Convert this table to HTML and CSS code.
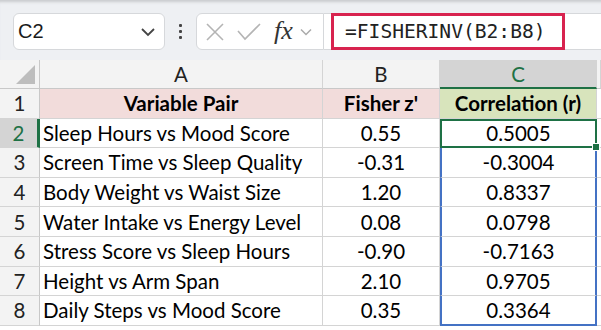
FILE: index.html
```html
<!DOCTYPE html>
<html>
<head>
<meta charset="utf-8">
<link rel="stylesheet" href="styles.css">
</head>
<body>
<div class="toolbar">
  <div class="namebox">
    <span class="name">C2</span>
    <svg class="chev" width="16" height="10" viewBox="0 0 16 10"><path d="M2 2 L8 8 L14 2" fill="none" stroke="#444" stroke-width="1.8"/></svg>
  </div>
  <div class="dots"><i></i><i></i><i></i></div>
  <div class="fxbox">
    <svg width="20" height="20" viewBox="0 0 20 20"><path d="M2 2 L18 18 M18 2 L2 18" stroke="#b4b4b4" stroke-width="1.6" fill="none"/></svg>
    <svg width="26" height="20" viewBox="0 0 26 20"><path d="M2 9 L9 17 L24 2" stroke="#b4b4b4" stroke-width="1.6" fill="none"/></svg>
    <span class="fx">fx</span>
    <svg class="chev2" width="12" height="8" viewBox="0 0 12 8"><path d="M1 1.5 L6 6.5 L11 1.5" fill="none" stroke="#aaa" stroke-width="1.5"/></svg>
  </div>
  <div class="formula">
    <div class="hl">=FISHERINV(B2:B8)</div>
  </div>
</div>
<div class="sheet">
  <div class="corner"><span class="tri"></span></div>
  <div class="ch">A</div>
  <div class="ch">B</div>
  <div class="ch sel">C</div>
  <div class="ch rest"></div>

  <div class="rh">1</div>
  <div class="c hd pink ctr">Variable Pair</div>
  <div class="c hd pink ctr">Fisher z'</div>
  <div class="c hd green ctr">Correlation (r)</div>
  <div class="c rest"></div>

  <div class="rh rsel">2</div>
  <div class="c">Sleep Hours vs Mood Score</div>
  <div class="c ctr">0.55</div>
  <div class="c ctr active">0.5005<span class="handle"></span></div>
  <div class="c rest"></div>

  <div class="rh">3</div>
  <div class="c">Screen Time vs Sleep Quality</div>
  <div class="c ctr">-0.31</div>
  <div class="c ctr rng">-0.3004</div>
  <div class="c rest"></div>

  <div class="rh">4</div>
  <div class="c">Body Weight vs Waist Size</div>
  <div class="c ctr">1.20</div>
  <div class="c ctr rng">0.8337</div>
  <div class="c rest"></div>

  <div class="rh">5</div>
  <div class="c">Water Intake vs Energy Level</div>
  <div class="c ctr">0.08</div>
  <div class="c ctr rng">0.0798</div>
  <div class="c rest"></div>

  <div class="rh">6</div>
  <div class="c">Stress Score vs Sleep Hours</div>
  <div class="c ctr">-0.90</div>
  <div class="c ctr rng">-0.7163</div>
  <div class="c rest"></div>

  <div class="rh">7</div>
  <div class="c">Height vs Arm Span</div>
  <div class="c ctr">2.10</div>
  <div class="c ctr rng">0.9705</div>
  <div class="c rest"></div>

  <div class="rh">8</div>
  <div class="c">Daily Steps vs Mood Score</div>
  <div class="c ctr">0.35</div>
  <div class="c ctr rng last">0.3364</div>
  <div class="c rest"></div>
</div>
</body>
</html>
```
FILE: styles.css
```css
* { box-sizing: border-box; }
html, body { margin: 0; padding: 0; }
body {
  width: 601px;
  height: 330px;
  overflow: hidden;
  background: #fff;
  font-family: Lato, "Open Sans", sans-serif;
}
.toolbar {
  height: 60px;
  background: #eef0f3;
  display: flex;
  align-items: flex-start;
  padding: 13px 0 0 13px;
  box-shadow: inset 0 4px 3px -2px #c9cbce;
}
.namebox {
  width: 152px;
  height: 37px;
  background: #fff;
  border: 1px solid #d6d8db;
  border-radius: 6px;
  display: flex;
  align-items: center;
  justify-content: space-between;
  padding: 0 8px 0 4px;
}
.name {
  font-family: "Liberation Sans", Arial, sans-serif;
  font-size: 20px;
  color: #1a1a1a;
}
.dots {
  width: 31px;
  height: 37px;
  display: flex;
  flex-direction: column;
  align-items: center;
  justify-content: center;
  gap: 3px;
}
.dots i {
  width: 3px;
  height: 3px;
  background: #444;
  border-radius: 1px;
  display: block;
}
.fxbox {
  width: 128px;
  height: 37px;
  background: #fff;
  border: 1px solid #d6d8db;
  border-radius: 6px 0 0 6px;
  display: flex;
  align-items: center;
  padding-left: 8px;
  gap: 11px;
}
.fx {
  font-family: "Liberation Serif", serif;
  font-style: italic;
  font-size: 26px;
  line-height: 26px;
  color: #333;
  margin-left: 1px;
  margin-top: -2px;
}
.chev2 { margin-left: -4px; }
.formula {
  flex: 1;
  height: 37px;
  background: #fff;
  border-top: 1px solid #d6d8db;
  border-bottom: 1px solid #d6d8db;
  padding-left: 7px;
}
.hl {
  width: 234px;
  height: 37px;
  margin-top: -1px;
  border: 3px solid #d8234f;
  font-family: "DejaVu Sans Mono", "Liberation Mono", monospace;
  font-size: 19.6px;
  line-height: 31px;
  padding-left: 11px;
  color: #222;
}
.sheet {
  display: grid;
  grid-template-columns: 40px 283px 117px 157px 4px;
  grid-template-rows: 29px repeat(8, 29.6px);
  font-size: 20.5px;
  color: #000;
}
.corner {
  background: #f3f3f3;
  border-right: 1px solid #c8c8c8;
  border-bottom: 1px solid #c8c8c8;
  position: relative;
}
.tri {
  position: absolute;
  left: 16px;
  top: 5px;
  width: 0;
  height: 0;
  border-left: 19px solid transparent;
  border-bottom: 19px solid #bdbdbd;
}
.ch {
  background: #f3f3f3;
  border-right: 1px solid #d4d4d4;
  border-bottom: 1px solid #c8c8c8;
  display: flex;
  align-items: center;
  justify-content: center;
  color: #222;
}
.ch.sel {
  background: #d4d4d4;
  color: #1e7145;
  border-bottom: 2px solid #1e7145;
}
.ch.rest { background: #f3f3f3; }
.rh {
  background: #f3f3f3;
  border-right: 1px solid #c8c8c8;
  border-bottom: 1px solid #d4d4d4;
  display: flex;
  align-items: center;
  justify-content: center;
  color: #222;
}
.rh.rsel {
  background: #d4d4d4;
  color: #1e7145;
  border-right: 3px solid #1e7145;
}
.c {
  border-right: 1px solid #d4d4d4;
  border-bottom: 1px solid #d4d4d4;
  display: flex;
  align-items: center;
  padding-left: 3px;
  white-space: nowrap;
  position: relative;
}
.c.ctr { justify-content: center; padding-left: 0; }
.hd { font-weight: bold; }
.pink { background: #f2dcdb; }
.green { background: #d8e4bc; }
.c.rest { border-right: none; }
.active {
  border: 2px solid #1e7145;
  z-index: 2;
}
.handle {
  position: absolute;
  right: -5px;
  bottom: -5px;
  width: 8px;
  height: 8px;
  background: #1e7145;
  border: 1px solid #fff;
}
.rng {
  border-left: 2px solid #4472c4;
  border-right: 2px solid #4472c4;
}
.last { border-bottom: 2px solid #4472c4; }
```
